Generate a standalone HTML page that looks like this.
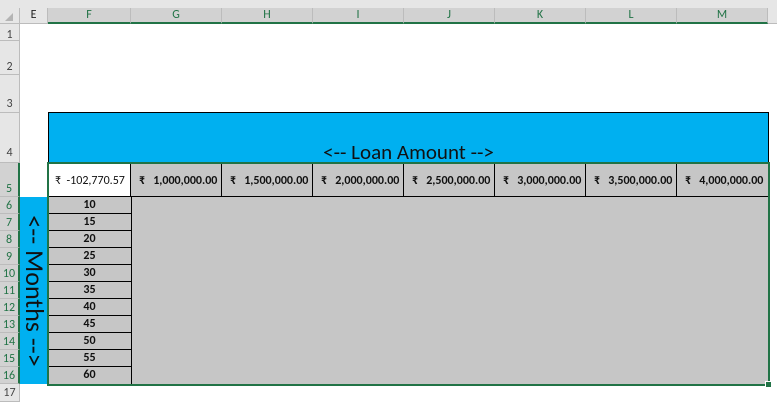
<!DOCTYPE html>
<html><head><style>
*{margin:0;padding:0;box-sizing:border-box}
body{width:777px;height:402px;background:#fff;position:relative;overflow:hidden;font-family:Calibri,"Liberation Sans",sans-serif;}
div{position:absolute}
.ch{top:8px;height:16px;background:#d2d2d2;border-right:1px solid #bcbcbc;border-bottom:2px solid #217346;font-size:12px;color:#217346;text-align:center;line-height:15px}
.rh{left:0;width:20px;background:#e6e6e6;border-bottom:1px solid #bcbcbc;border-right:1px solid #bcbcbc;font-size:12px;color:#444;text-align:center}
.rhs{color:#217346;background:#d2d2d2;border-right:2px solid #217346}
.hc{top:163px;height:34px;background:#c6c6c6;border-right:1px solid #000;font-size:12px;font-weight:bold;line-height:36px;color:#111;white-space:nowrap}
.mc{left:48px;width:84px;height:17px;background:#c6c6c6;border-bottom:1px solid #000;border-right:1px solid #000;font-size:12px;font-weight:bold;text-align:center;line-height:16px;color:#111}
</style></head><body>
<div style="left:0;top:0;width:777px;height:8px;background:#e6e6e6"></div>
<div style="left:0;top:8px;width:20px;height:16px;background:#e6e6e6;border-right:1px solid #bcbcbc;border-bottom:1px solid #bcbcbc"></div>
<div style="left:5px;top:13px;width:0;height:0;border-left:8px solid transparent;border-bottom:8px solid #b4b4b4"></div>
<div style="left:20px;top:8px;width:28px;height:16px;background:#e6e6e6;border-right:1px solid #bcbcbc;border-bottom:1px solid #bcbcbc;font-size:12px;text-align:center;line-height:15px;color:#222">E</div>
<div class="ch" style="left:48px;width:83px">F</div>
<div class="ch" style="left:131px;width:91px">G</div>
<div class="ch" style="left:222px;width:91px">H</div>
<div class="ch" style="left:313px;width:91px">I</div>
<div class="ch" style="left:404px;width:91px">J</div>
<div class="ch" style="left:495px;width:91px">K</div>
<div class="ch" style="left:586px;width:91px">L</div>
<div class="ch" style="left:677px;width:91px">M</div>
<div style="left:768px;top:8px;width:9px;height:16px;background:#e6e6e6;border-bottom:1px solid #bcbcbc"></div>

<div class="rh" style="top:24px;height:17px;line-height:22px">1</div>
<div class="rh" style="top:41px;height:34px;line-height:52px">2</div>
<div class="rh" style="top:75px;height:38px;line-height:58px">3</div>
<div class="rh" style="top:113px;height:50px;line-height:80px">4</div>
<div class="rh rhs" style="top:163px;height:34px;line-height:52px">5</div>
<div class="rh rhs" style="top:197px;height:17px;line-height:18px">6</div>
<div class="rh rhs" style="top:214px;height:17px;line-height:18px">7</div>
<div class="rh rhs" style="top:231px;height:17px;line-height:18px">8</div>
<div class="rh rhs" style="top:248px;height:17px;line-height:18px">9</div>
<div class="rh rhs" style="top:265px;height:17px;line-height:18px">10</div>
<div class="rh rhs" style="top:282px;height:17px;line-height:18px">11</div>
<div class="rh rhs" style="top:299px;height:17px;line-height:18px">12</div>
<div class="rh rhs" style="top:316px;height:17px;line-height:18px">13</div>
<div class="rh rhs" style="top:333px;height:17px;line-height:18px">14</div>
<div class="rh rhs" style="top:350px;height:17px;line-height:18px">15</div>
<div class="rh rhs" style="top:367px;height:17px;line-height:18px">16</div>
<div class="rh" style="top:384px;height:18px;line-height:18px">17</div>

<div style="left:48px;top:112px;width:721px;height:52px;background:#00b0f0;border:1px solid #000;font-size:21px;text-align:center;line-height:78px;color:#111">&lt;-- Loan Amount --&gt;</div>

<div style="left:20px;top:197px;width:28px;height:187px;background:#00b0f0"></div>
<div style="left:35px;top:291px;width:0;height:0"><div style="left:-100px;top:-14px;width:200px;height:28px;transform:rotate(90deg);font-size:26px;text-align:center;line-height:28px;color:#111;white-space:nowrap">&lt;-- Months --&gt;</div></div>

<div style="left:131px;top:197px;width:637px;height:187px;background:#c6c6c6"></div>
<div class="hc" style="left:48px;width:83px;background:#fff;padding-left:7px;font-weight:normal">₹&nbsp; -102,770.57</div>
<div class="hc" style="left:131px;width:91px;padding-left:8px">₹&nbsp;&nbsp; 1,000,000.00</div>
<div class="hc" style="left:222px;width:91px;padding-left:8px">₹&nbsp;&nbsp; 1,500,000.00</div>
<div class="hc" style="left:313px;width:91px;padding-left:8px">₹&nbsp;&nbsp; 2,000,000.00</div>
<div class="hc" style="left:404px;width:91px;padding-left:8px">₹&nbsp;&nbsp; 2,500,000.00</div>
<div class="hc" style="left:495px;width:91px;padding-left:8px">₹&nbsp;&nbsp; 3,000,000.00</div>
<div class="hc" style="left:586px;width:91px;padding-left:8px">₹&nbsp;&nbsp; 3,500,000.00</div>
<div class="hc" style="left:677px;width:91px;padding-left:8px;border-right:none">₹&nbsp;&nbsp; 4,000,000.00</div>
<div style="left:48px;top:196px;width:720px;height:1px;background:#000"></div>

<div class="mc" style="top:197px">10</div>
<div class="mc" style="top:214px">15</div>
<div class="mc" style="top:231px">20</div>
<div class="mc" style="top:248px">25</div>
<div class="mc" style="top:265px">30</div>
<div class="mc" style="top:282px">35</div>
<div class="mc" style="top:299px">40</div>
<div class="mc" style="top:316px">45</div>
<div class="mc" style="top:333px">50</div>
<div class="mc" style="top:350px">55</div>
<div class="mc" style="top:367px;border-bottom:none">60</div>

<div style="left:47px;top:162px;width:723px;height:224px;border:2px solid #217346"></div>
<div style="left:765px;top:381px;width:7px;height:7px;background:#217346;border:1px solid #fff"></div>
</body></html>
